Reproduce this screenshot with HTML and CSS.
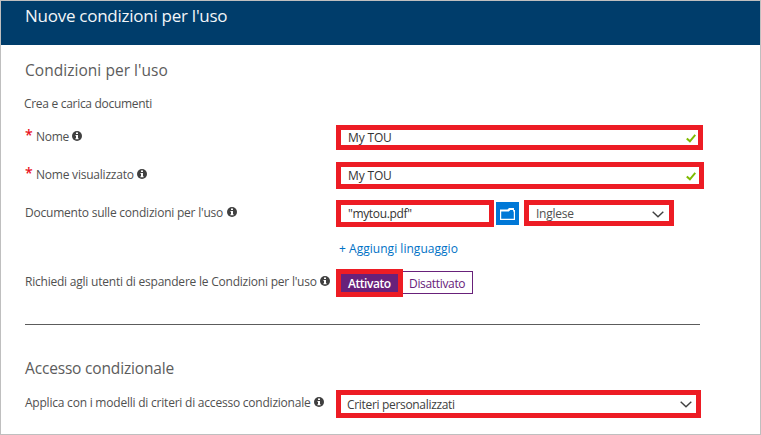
FILE: index.html
```html
<!DOCTYPE html>
<html lang="it">
<head>
<meta charset="utf-8">
<title>Nuove condizioni per l'uso</title>
<link rel="stylesheet" href="styles.css">
</head>
<body>
<svg class="defs" aria-hidden="true">
  <symbol id="info" viewBox="0 0 10 10"><circle cx="5" cy="5" r="5" fill="#404040"/><path d="M4 1.5h2v1.5H4zM3.5 4H6v3.2h.6v1H3.4v-1H4V5h-.5z" fill="#fff"/></symbol>
  <symbol id="check" viewBox="0 0 10 9"><path d="M.8 4.4 3.9 7.3 9.3.8" fill="none" stroke="#7fba00" stroke-width="2"/></symbol>
  <symbol id="chevron" viewBox="0 0 12 7"><path d="M.7.7 6 5.8 11.3.7" fill="none" stroke="#404040" stroke-width="1.4"/></symbol>
</svg>
<main class="blade">
  <header class="blade-header"><h1>Nuove condizioni per l'uso</h1></header>
  <div class="content">
    <h2 class="terms-title">Condizioni per l'uso</h2>
    <p class="intro">Crea e carica documenti</p>

    <div class="row row-name">
      <div class="label"><span class="required">*</span><span class="nome">Nome</span><svg class="info"><use href="#info"/></svg></div>
      <div class="field name-field"><span class="my-tou">My TOU</span><svg class="check"><use href="#check"/></svg></div>
    </div>

    <div class="row row-display">
      <div class="label"><span class="required">*</span><span>Nome visualizzato</span><svg class="info"><use href="#info"/></svg></div>
      <div class="field display-field"><span class="my-tou">My TOU</span><svg class="check"><use href="#check"/></svg></div>
    </div>

    <div class="row row-document">
      <div class="label"><span>Documento sulle condizioni per l'uso</span><svg class="info"><use href="#info"/></svg></div>
      <div class="controls">
        <div class="field file-field"><span>"mytou.pdf"</span></div>
        <button class="browse" aria-label="Sfoglia"><svg viewBox="0 0 15 12"><path d="M0 1.5h7.5L9 0h5v2h1v10H0z" fill="#fff"/><path d="M1.2 3.4h7.6l1.5-1.5h2.8v1.5h.7v7.4H1.2z" fill="#0078d7"/></svg></button>
        <div class="field language-field"><span class="language">Inglese</span><svg class="chevron"><use href="#chevron"/></svg></div>
      </div>
    </div>

    <a class="add-language">+ Aggiungi linguaggio</a>

    <div class="row row-expand">
      <div class="label"><span>Richiedi agli utenti di espandere le Condizioni per l'uso</span><svg class="info"><use href="#info"/></svg></div>
      <div class="toggle"><div class="on">Attivato</div><div class="off">Disattivato</div></div>
    </div>

    <hr>
    <h2 class="access-title">Accesso condizionale</h2>

    <div class="row row-policy">
      <div class="label"><span>Applica con i modelli di criteri di accesso condizionale</span><svg class="info"><use href="#info"/></svg></div>
      <div class="field policy-field"><span class="policy">Criteri personalizzati</span><svg class="chevron"><use href="#chevron"/></svg></div>
    </div>
  </div>
</main>
</body>
</html>
```
FILE: styles.css
```css
* { box-sizing: border-box; }
body {
  margin: 0;
  font: 12px/16px "Open Sans", "Noto Sans", sans-serif;
  letter-spacing: -.22px;
  color: #505050;
  white-space: nowrap;
}
h1, h2, p { margin: 0; font-weight: 400; }
svg { display: block; flex: none; }
.defs { display: none; }

.blade {
  height: 435px;
  border: 1px solid #bfbfbf;
  background: #fff;
  overflow: hidden;
}
.blade-header { height: 44px; padding: 3px 24px; background: #003d6b; }
h1 { font-size: 17px; line-height: 24px; letter-spacing: -.26px; color: #f2f5f8; }
h2 { font-size: 15.5px; line-height: 22px; color: #5c5c5c; }
.content { padding: 0 24px; }

.terms-title { margin-top: 14px; letter-spacing: .04px; }
.intro { margin: 15px 0 0 -1px; letter-spacing: -.3px; }

.row { display: grid; grid-template-columns: 311px auto; justify-content: start; align-items: start; }
.row-name { margin-top: 13px; }
.row-display { margin-top: 12px; }
.row-document { margin-top: 11px; }
.row-expand { margin-top: 12px; }
.row-policy { margin-top: 11px; }

.label { display: flex; padding-top: 5px; }
.row-name .label { padding-top: 4px; }
.required { width: 11px; font-size: 14px; line-height: 12px; font-weight: 600; color: #e81123; }
.nome { letter-spacing: -.3px; }
.info { width: 10px; height: 10px; margin: 2px 0 0 3.5px; }

.field {
  display: flex;
  align-items: center;
  border: 5px solid #ed1c24;
  padding-left: 7px;
  line-height: 15px;
  color: #333;
  background: #fff;
}
.name-field { width: 367px; height: 25px; }
.display-field { width: 368px; height: 27px; }
.my-tou { letter-spacing: -.15px; }
.check { width: 10px; height: 9px; margin: 1px 2px 0 auto; }
.display-field .check { margin-right: 3px; }
.controls { display: flex; }
.file-field { width: 158px; height: 27px; letter-spacing: -.35px; }
.browse {
  display: grid;
  place-items: center;
  width: 23px;
  height: 23px;
  margin: 2px 5px 0 2px;
  padding: 0;
  border: 0;
  background: #0078d7;
}
.browse svg { width: 15px; height: 12px; }
.language-field { width: 150px; height: 26px; padding-top: 1px; color: #505050; }
.language { letter-spacing: -.25px; }
.chevron { width: 12px; height: 7px; margin: 1px 5px 0 auto; }

.add-language { display: block; margin: 14px 0 0 314px; letter-spacing: .03px; color: #0072c6; }

.toggle { display: flex; align-items: flex-start; }
.on {
  width: 67px;
  height: 28px;
  border: 5px solid #ed1c24;
  padding-left: 7px;
  font-weight: 600;
  line-height: 19px;
  letter-spacing: -.45px;
  color: #fff;
  background: #68217a;
}
.off {
  width: 70px;
  height: 23px;
  margin-top: 2px;
  padding: 1px 0 0 6px;
  border: 1px solid #68217a;
  border-left: 0;
  line-height: 22px;
  letter-spacing: -.33px;
  color: #68217a;
}
hr { width: 675px; height: 1px; margin: 27px 0 0; border: 0; background: #5c5c5c; }
.access-title { margin-top: 32px; letter-spacing: -.17px; }
.policy-field { width: 365px; height: 28px; padding-left: 6px; color: #404040; }
.policy { letter-spacing: -.32px; }
.policy-field .chevron { margin-right: 4px; }
```
